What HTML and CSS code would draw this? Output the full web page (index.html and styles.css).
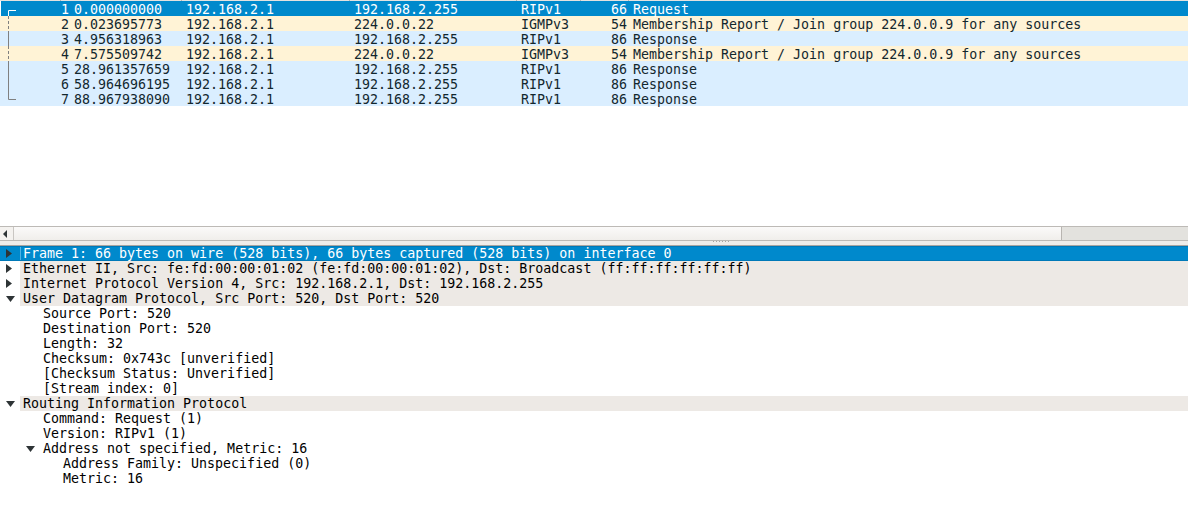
FILE: index.html
```html
<!DOCTYPE html>
<html>
<head>
<meta charset="utf-8">
<link rel="stylesheet" href="styles.css">
</head>
<body>
<div class="app">
  <div class="plist">
    <div class="phead">
      <div class="hc"></div><div class="hc"></div><div class="hc"></div><div class="hc"></div><div class="hc"></div><div class="hc"></div><div class="hc last"></div>
    </div>
    <div class="rows">
      <div class="row sel"><span class="no">1</span><span class="time">0.000000000</span><span>192.168.2.1</span><span>192.168.2.255</span><span>RIPv1</span><span class="len">66</span><span class="info">Request</span></div>
      <div class="row igmp"><span class="no">2</span><span class="time">0.023695773</span><span>192.168.2.1</span><span>224.0.0.22</span><span>IGMPv3</span><span class="len">54</span><span class="info">Membership Report / Join group 224.0.0.9 for any sources</span></div>
      <div class="row rip"><span class="no">3</span><span class="time">4.956318963</span><span>192.168.2.1</span><span>192.168.2.255</span><span>RIPv1</span><span class="len">86</span><span class="info">Response</span></div>
      <div class="row igmp"><span class="no">4</span><span class="time">7.575509742</span><span>192.168.2.1</span><span>224.0.0.22</span><span>IGMPv3</span><span class="len">54</span><span class="info">Membership Report / Join group 224.0.0.9 for any sources</span></div>
      <div class="row rip"><span class="no">5</span><span class="time">28.961357659</span><span>192.168.2.1</span><span>192.168.2.255</span><span>RIPv1</span><span class="len">86</span><span class="info">Response</span></div>
      <div class="row rip"><span class="no">6</span><span class="time">58.964696195</span><span>192.168.2.1</span><span>192.168.2.255</span><span>RIPv1</span><span class="len">86</span><span class="info">Response</span></div>
      <div class="row rip"><span class="no">7</span><span class="time">88.967938090</span><span>192.168.2.1</span><span>192.168.2.255</span><span>RIPv1</span><span class="len">86</span><span class="info">Response</span></div>
      <svg class="bracket" width="20" height="105" viewBox="0 0 20 105">
        <path d="M16 9.5 H8.5 V15" stroke="#ffffff" stroke-width="1" fill="none"/>
        <path d="M8.5 15 V98.5 H16" stroke="#808080" stroke-width="1" fill="none"/>
        <path d="M8.5 15 V30 M8.5 45 V60" stroke="#fff3d6" stroke-width="1.2" stroke-dasharray="2 3" stroke-dashoffset="-3" fill="none"/>
      </svg>
    </div>
  </div>
  <div class="hscroll">
    <div class="arrow"><svg width="5" height="8" viewBox="0 0 5 8"><path d="M4 0 L0 4 L4 8 Z" fill="#2e3436"/></svg></div>
    <div class="slider"></div>
    <div class="trough"></div>
  </div>
  <div class="splitter"><div class="grip"></div></div>
  <div class="tree">
    <div class="node top sel"><span class="exp"><svg width="6" height="9" viewBox="0 0 6 9"><path d="M0 0 L6 4.5 L0 9 Z" fill="#2e3436"/></svg></span><span class="lbl focus">Frame 1: 66 bytes on wire (528 bits), 66 bytes captured (528 bits) on interface 0</span></div>
    <div class="node top"><span class="exp"><svg width="6" height="9" viewBox="0 0 6 9"><path d="M0 0 L6 4.5 L0 9 Z" fill="#2e3436"/></svg></span><span class="lbl">Ethernet II, Src: fe:fd:00:00:01:02 (fe:fd:00:00:01:02), Dst: Broadcast (ff:ff:ff:ff:ff:ff)</span></div>
    <div class="node top"><span class="exp"><svg width="6" height="9" viewBox="0 0 6 9"><path d="M0 0 L6 4.5 L0 9 Z" fill="#2e3436"/></svg></span><span class="lbl">Internet Protocol Version 4, Src: 192.168.2.1, Dst: 192.168.2.255</span></div>
    <div class="node top"><span class="exp"><svg width="9" height="6" viewBox="0 0 9 6"><path d="M0 0 L9 0 L4.5 6 Z" fill="#2e3436"/></svg></span><span class="lbl">User Datagram Protocol, Src Port: 520, Dst Port: 520</span></div>
    <div class="node l1"><span class="lbl">Source Port: 520</span></div>
    <div class="node l1"><span class="lbl">Destination Port: 520</span></div>
    <div class="node l1"><span class="lbl">Length: 32</span></div>
    <div class="node l1"><span class="lbl">Checksum: 0x743c [unverified]</span></div>
    <div class="node l1"><span class="lbl">[Checksum Status: Unverified]</span></div>
    <div class="node l1"><span class="lbl">[Stream index: 0]</span></div>
    <div class="node top"><span class="exp"><svg width="9" height="6" viewBox="0 0 9 6"><path d="M0 0 L9 0 L4.5 6 Z" fill="#2e3436"/></svg></span><span class="lbl">Routing Information Protocol</span></div>
    <div class="node l1"><span class="lbl">Command: Request (1)</span></div>
    <div class="node l1"><span class="lbl">Version: RIPv1 (1)</span></div>
    <div class="node l1e"><span class="exp"><svg width="9" height="6" viewBox="0 0 9 6"><path d="M0 0 L9 0 L4.5 6 Z" fill="#2e3436"/></svg></span><span class="lbl">Address not specified, Metric: 16</span></div>
    <div class="node l2"><span class="lbl">Address Family: Unspecified (0)</span></div>
    <div class="node l2"><span class="lbl">Metric: 16</span></div>
  </div>
</div>
</body>
</html>
```
FILE: styles.css
```css
* { box-sizing: border-box; }
html, body { margin: 0; padding: 0; background: #ffffff; }
.app {
  width: 1188px;
  height: 529px;
  overflow: hidden;
  display: flex;
  flex-direction: column;
  font-family: "DejaVu Sans Mono", "Liberation Mono", monospace;
  font-size: 13.3px;
  color: #000000;
}
.plist { height: 226px; background: #ffffff; display: flex; flex-direction: column; }
.phead {
  height: 1px;
  display: grid;
  grid-template-columns: 61px 121px 168px 167px 64px 48px 1fr;
  background: #e4e2df;
}
.hc { border-right: 1px solid #b8b5b1; }
.hc.last { border-right: none; }
.rows { position: relative; }
.row {
  height: 15px;
  padding-top: 2px;
  line-height: 13px;
  display: grid;
  grid-template-columns: 69px 117px 168px 167px 69px 37px 1fr;
  white-space: pre;
  color: #12272e;
}
.row.rip { background: #daeeff; }
.row.igmp { background: #fff3d6; }
.row.sel { background: #0089cc; color: #ffffff; margin-left: 1px; grid-template-columns: 68px 117px 168px 167px 69px 37px 1fr; }
.no { text-align: right; }
.time { padding-left: 5px; }
.len { text-align: right; }
.info { padding-left: 6px; }
.bracket { position: absolute; left: 0; top: 0; }
.hscroll {
  height: 15px;
  display: flex;
  border-top: 1px solid #bdbab6;
  border-bottom: 1px solid #bdbab6;
  background: #e3e2de;
}
.arrow {
  width: 13px;
  display: flex;
  align-items: center;
  padding-left: 3px;
  background: #f4f2ef;
}
.slider {
  width: 1049px;
  background: linear-gradient(#fbfaf9, #f0eeeb);
  border-left: 1px solid #c9c6c2;
  border-right: 1px solid #b8b5b1;
}
.trough { flex: 1; background: #e3e2de; }
.splitter {
  height: 5px;
  background: #efedea;
  border-bottom: 1px solid #a8a5a1;
  position: relative;
}
.grip {
  position: absolute;
  left: 713px;
  top: 0;
  width: 16px;
  height: 1px;
  background: repeating-linear-gradient(90deg, #a8a5a1 0 1px, transparent 1px 3px);
}
.tree { flex: 1; background: #ffffff; }
.node {
  height: 15px;
  line-height: 15px;
  display: flex;
  white-space: pre;
  color: #000000;
}
.node .exp {
  width: 20px;
  display: flex;
  align-items: center;
  justify-content: flex-start;
  padding-left: 6px;
}
.node.top .lbl { flex: 1; background: #ede9e5; padding-left: 3px; }
.node.sel { background: #0089cc; border-top: 1px solid #0079b8; line-height: 13px; height: 15px; border-bottom: 1px solid #0079b8; }
.node.sel .lbl { background: transparent; color: #ffffff; border-left: 1px solid #4fb3e6; padding-left: 2px; }
.node.l1 { padding-left: 43px; }
.node.l1e { padding-left: 20px; }
.node.l1e .exp { width: 23px; padding-left: 6px; }
.node.l2 { padding-left: 63px; }
```
